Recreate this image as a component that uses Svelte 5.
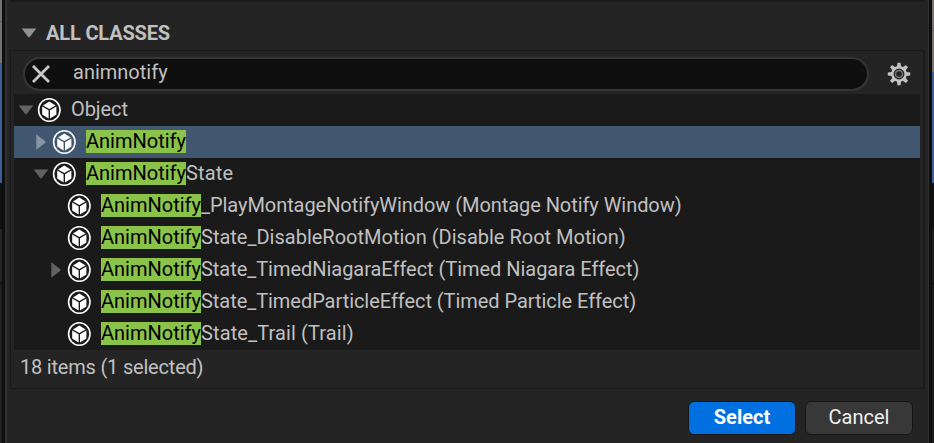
<script>
  const rows = [
    { depth: 0, arrow: 'down', hit: '', rest: 'Object', tracking: -0.08 },
    { depth: 1, arrow: 'right', hit: 'AnimNotify', rest: '', selected: true, tracking: 0 },
    { depth: 1, arrow: 'down', hit: 'AnimNotify', rest: 'State', tracking: 0.15 },
    { depth: 2, arrow: '', hit: 'AnimNotify', rest: '_PlayMontageNotifyWindow (Montage Notify Window)', tracking: -0.06 },
    { depth: 2, arrow: '', hit: 'AnimNotify', rest: 'State_DisableRootMotion (Disable Root Motion)', tracking: 0 },
    { depth: 2, arrow: 'right', hit: 'AnimNotify', rest: 'State_TimedNiagaraEffect (Timed Niagara Effect)', tracking: -0.04 },
    { depth: 2, arrow: '', hit: 'AnimNotify', rest: 'State_TimedParticleEffect (Timed Particle Effect)', tracking: -0.05 },
    { depth: 2, arrow: '', hit: 'AnimNotify', rest: 'State_Trail (Trail)', tracking: 0.11 }
  ];
  const teeth = [0, 45, 90, 135, 180, 225, 270, 315];
</script>

<div class="screen">
  <div class="edge"></div>
  <main class="dialog">
    <div class="topline"></div>
    <header>
      <svg width="16" height="10" viewBox="0 0 16 10"><path d="M.7.5H15.3L9 8.8Q8 10 7 8.8Z" fill="#929292" /></svg>
      <span>ALL CLASSES</span>
    </header>
    <section class="picker">
      <div class="searchbar">
        <div class="field">
          <svg width="18" height="18" viewBox="0 0 18 18"><path d="M1 1 17 17M17 1 1 17" stroke="#c8c8c8" stroke-width="2.8" /></svg>
          <span>animnotify</span>
        </div>
        <svg class="gear" width="24" height="24" viewBox="-12 -12 24 24">
          {#each teeth as a}
            <path d="M-2.1-7 -1.5-11.2H1.5L2.1-7Z" fill="#c2c2c2" transform="rotate({a})" />
          {/each}
          <circle r="6.7" fill="none" stroke="#c2c2c2" stroke-width="2.5" />
          <circle r="3.5" fill="none" stroke="#777" stroke-width="1.5" />
        </svg>
      </div>
      <div class="tree">
        {#each rows as row}
          <div class="row" class:selected={row.selected} style="padding-left: {4 + row.depth * 15}px">
            <span class="arrow">
              {#if row.arrow === 'down'}
                <svg width="16" height="10" viewBox="0 0 16 10"><path d="M.7.5H15.3L9 8.8Q8 10 7 8.8Z" fill="#626262" /></svg>
              {:else if row.arrow === 'right'}
                <svg width="10" height="16" viewBox="0 0 10 16"><path d="M.3.3V15.7L9 9Q10 8 9 7Z" fill={row.selected ? '#8794a1' : '#626262'} /></svg>
              {/if}
            </span>
            <svg class="cube" width="24" height="26" viewBox="0 0 24 26">
              <ellipse cx="12.3" cy="13" rx="10.7" ry="11.3" fill="none" stroke="#fff" stroke-width="1.6" />
              <path d="M12.3 4.6 18.6 8.4 12.3 11.9 6 8.4Z" fill="#fff" />
              <path d="M5.2 9.6 11.6 13.2V21.4L5.2 17.6Z" fill="#fff" />
              <path d="M19.4 9.6 13 13.2V21.4L19.4 17.6Z" fill="#fff" />
            </svg>
            <span class="label">{#if row.hit}<mark>{row.hit}</mark>{/if}<span style="letter-spacing: {row.tracking}px">{row.rest}</span></span>
          </div>
        {/each}
      </div>
      <div class="status">18 items (1 selected)</div>
    </section>
    <footer>
      <button class="primary">Select</button>
      <button>Cancel</button>
    </footer>
  </main>
  <div class="edge right"></div>
</div>

<style>
  .screen {
    display: flex;
    width: 934px;
    height: 443px;
    overflow: hidden;
    background: #0e0e0e;
    font-family: Roboto, sans-serif;
    font-size: 20px;
    line-height: 23px;
    color: #c0c0c0;
  }
  svg { display: block; flex: none; }
  .edge {
    width: 2px;
    flex: none;
    background: linear-gradient(#77716d 0 21px, #645f5c 21px 22px, #77716d 22px 63px, #3d5f94 63px 183px, #101010 183px 229px, #242424 229px 282px, #151515 282px 285px, #202020 285px);
  }
  .edge.right {
    background: linear-gradient(#77716d 0 30px, #645f5c 30px 31px, #77716d 31px 72px, #3d5f94 72px 183px, #101010 183px 229px, #1c1c1c 229px 282px, #111 282px 285px, #191919 285px);
  }
  .dialog {
    display: flex;
    flex-direction: column;
    box-sizing: border-box;
    width: 924px;
    height: 443px;
    margin: 0 3px;
    padding: 0 3px;
    border: solid #303030;
    border-width: 0 1px 0 2px;
    background: #242424;
  }
  .topline { height: 2px; flex: none; background: #1a1a1a; }
  header {
    display: flex;
    align-items: center;
    gap: 9px;
    height: 48px;
    padding: 13px 0 0 11px;
    box-sizing: border-box;
    font-weight: 700;
    letter-spacing: -0.16px;
  }
  header span { display: block; margin-top: 2px; }
  .picker {
    box-sizing: border-box;
    height: 339px;
    border: 1px solid #1a1a1a;
    border-right-width: 2px;
    padding: 0 3px;
  }
  .searchbar {
    display: flex;
    align-items: center;
    height: 43px;
    padding: 3px 9px 0 9px;
    box-sizing: border-box;
    justify-content: space-between;
  }
  .field {
    display: flex;
    align-items: center;
    box-sizing: border-box;
    width: 846px;
    height: 34px;
    padding-left: 7px;
    border: 2px solid #353535;
    border-radius: 17px;
    background: #0f0f0f;
  }
  .field span { margin: -3px 0 0 23px; }
  .tree { height: 256px; background: #1a1a1a; }
  .row {
    display: flex;
    align-items: center;
    box-sizing: border-box;
    height: 32px;
    white-space: nowrap;
  }
  .selected { background: #40576f; }
  .arrow {
    display: flex;
    justify-content: center;
    width: 16px;
    margin-right: 3px;
  }
  .label { display: flex; margin: -1px 0 0 10px; }
  mark { background: #8bc24a; color: #000; }
  .status { padding: 6px 0 0 6px; letter-spacing: -0.2px; }
  footer {
    display: flex;
    justify-content: flex-end;
    gap: 9px;
    padding: 12px 12px 0 0;
  }
  button {
    box-sizing: border-box;
    width: 108px;
    height: 34px;
    padding: 0 0 2px;
    border: 1px solid #151515;
    border-radius: 6px;
    background: #383838;
    color: #f0f0f0;
    font: 20px/23px Roboto, sans-serif;
  }
  .primary { background: #0070e0; color: #fff; font-weight: 700; }
</style>
